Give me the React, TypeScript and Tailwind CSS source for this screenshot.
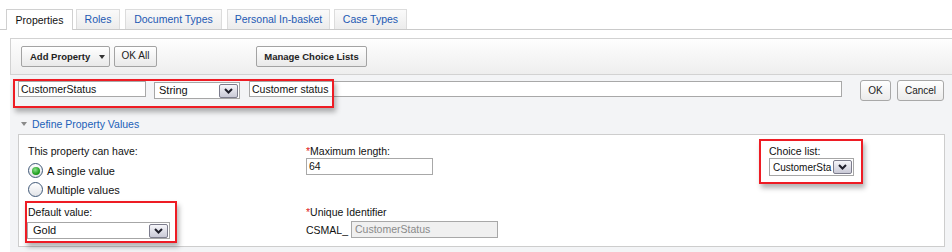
import React from "react";

const Chevron = () => (
  <svg width="9" height="6" viewBox="0 0 9 6" className="block">
    <path d="M1 1 L4.5 4.5 L8 1" fill="none" stroke="#1e1e2a" strokeWidth="2" />
  </svg>
);

const SelectBox = ({
  value,
  className,
  textClass = "",
}: {
  value: string;
  className: string;
  textClass?: string;
}) => (
  <div
    className={`flex items-center border border-[#a6a6a6] bg-white overflow-hidden ${className}`}
  >
    <span className={`flex-1 overflow-hidden whitespace-nowrap ${textClass}`}>{value}</span>
    <div className="mr-[1px] flex h-[14px] w-[19px] shrink-0 items-center justify-center rounded-[2px] border border-[#7c7c8c] bg-gradient-to-b from-[#f6f6fa] to-[#c9c9d6]">
      <Chevron />
    </div>
  </div>
);

const Radio = ({ checked }: { checked: boolean }) => (
  <div className="flex h-[15px] w-[15px] shrink-0 items-center justify-center rounded-full border border-[#3f5877] bg-gradient-to-b from-white to-[#e2e4e8]">
    {checked && (
      <div className="h-[8px] w-[8px] rounded-full bg-[radial-gradient(circle_at_40%_35%,#8be08b,#22a022_60%,#137a13)]" />
    )}
  </div>
);

export default function App() {
  const tabs = [
    { label: "Properties", w: "w-[67px]", ml: "ml-0", active: true },
    { label: "Roles", w: "w-[44px]", ml: "ml-[3px]", active: false },
    { label: "Document Types", w: "w-[97px]", ml: "ml-[5px]", active: false },
    { label: "Personal In-basket", w: "w-[103px]", ml: "ml-[5px]", active: false },
    { label: "Case Types", w: "w-[73px]", ml: "ml-[4px]", active: false },
  ];

  return (
    <div className="relative h-[252px] w-[952px] overflow-hidden bg-white font-['Liberation_Sans',Arial,sans-serif] text-[10.5px] leading-[13px] text-[#111]">
      {/* Tabs */}
      <div className="flex h-[30px] items-end border-b border-[#cacaca] pl-[6px]">
        {tabs.map((t) =>
          t.active ? (
            <div
              key={t.label}
              className={`${t.w} ${t.ml} -mb-px flex h-[21px] items-center justify-center border border-b-0 border-[#d0d0d0] bg-white text-[#111]`}
            >
              {t.label}
            </div>
          ) : (
            <div
              key={t.label}
              className={`${t.w} ${t.ml} flex h-[20px] items-center justify-center border border-b-0 border-[#dcdcdc] bg-gradient-to-b from-[#fafafa] to-[#ececec] text-[#1d59b3]`}
            >
              {t.label}
            </div>
          )
        )}
      </div>

      {/* Toolbar */}
      <div className="ml-[10px] mt-[8px] flex h-[37px] items-start border-y border-l border-[#d2d2d2] bg-gradient-to-b from-[#fefefe] to-[#eeeeee] pl-[10px] pt-[7px]">
        <div className="flex h-[21px] w-[89px] items-center rounded-[2px] border border-[#a3a3a3] bg-gradient-to-b from-white to-[#e9e9e9] pl-[8px] text-[9.5px] font-bold text-[#222]">
          <span>Add Property</span>
          <svg width="6" height="4" viewBox="0 0 6 4" className="ml-[9px] mt-[1px]">
            <path d="M0 0 L6 0 L3 4 Z" fill="#333" />
          </svg>
        </div>
        <div className="ml-[4px] flex h-[21px] w-[43px] items-start justify-center rounded-[2px] border border-[#a3a3a3] bg-gradient-to-b from-white to-[#e9e9e9] pt-[2px] text-[10px] text-[#222]">
          OK All
        </div>
        <div className="ml-[99px] flex h-[21px] w-[111px] items-center justify-center rounded-[2px] border border-[#a3a3a3] bg-gradient-to-b from-white to-[#e9e9e9] text-[9.5px] font-bold text-[#222]">
          Manage Choice Lists
        </div>
      </div>

      {/* Gray content area */}
      <div className="ml-[10px] h-[178px] bg-[#f3f4f6] pt-[5px]">
        {/* Property row */}
        <div className="flex items-start">
          <div className="ml-[8px] mt-[1px] flex h-[16px] w-[128px] items-center border border-[#a8a8a8] bg-white pl-[2px]">
            CustomerStatus
          </div>
          <SelectBox
            value="String"
            className="ml-[8px] mt-[2px] h-[17px] w-[86px]"
            textClass="pl-[4px] text-[11px]"
          />
          <div className="ml-[9px] mt-[1px] flex h-[16px] w-[593px] items-center border border-[#a8a8a8] bg-white pl-[2px]">
            Customer status
          </div>
          <div className="ml-[18px] flex h-[21px] w-[31px] items-center justify-center rounded-[3px] border border-[#a8a8a8] bg-gradient-to-b from-white to-[#ebebeb] text-[10px] text-[#222]">
            OK
          </div>
          <div className="ml-[6px] flex h-[21px] w-[47px] items-center justify-center rounded-[3px] border border-[#a8a8a8] bg-gradient-to-b from-white to-[#ebebeb] text-[10px] text-[#222]">
            Cancel
          </div>
        </div>

        {/* Define Property Values */}
        <div className="mt-[16px] flex h-[14px] items-center pl-[11px]">
          <svg width="6" height="4" viewBox="0 0 6 4">
            <path d="M0 0 L6 0 L3 4 Z" fill="#8a8a8a" />
          </svg>
          <span className="ml-[5px] text-[#2160b8]">Define Property Values</span>
        </div>

        {/* Panel */}
        <div className="ml-[8px] mt-[3px] flex h-[113px] w-[927px] border border-[#cdcdcd] bg-white">
          {/* Column 1 */}
          <div className="flex w-[287px] flex-col pl-[9px] pt-[10px]">
            <div className="h-[13px]">This property can have:</div>
            <div className="mt-[3px] flex h-[17px] items-end">
              <Radio checked />
              <span className="ml-[4px] text-[11px] leading-[13px]">A single value</span>
            </div>
            <div className="mt-[2px] flex h-[17px] items-end">
              <Radio checked={false} />
              <span className="ml-[4px] text-[11px] leading-[13px]">Multiple values</span>
            </div>
            <div className="mt-[9px] h-[13px]">Default value:</div>
            <SelectBox
              value="Gold"
              className="-ml-px mt-[3px] h-[17px] w-[143px]"
              textClass="pl-[5px] text-[11px]"
            />
          </div>

          {/* Column 2 */}
          <div className="flex w-[463px] flex-col pt-[10px]">
            <div className="h-[13px]">
              <span className="text-[#e02020]">*</span>Maximum length:
            </div>
            <div className="flex h-[17px] w-[127px] items-center border border-[#a8a8a8] bg-white pl-[2px]">
              64
            </div>
            <div className="mt-[31px] h-[13px]">
              <span className="text-[#e02020]">*</span>Unique Identifier
            </div>
            <div className="mt-[2px] flex items-center">
              <span className="mt-[1px]">CSMAL_</span>
              <div className="ml-[3px] flex h-[17px] w-[147px] items-center border border-[#a8a8a8] bg-[#f0f0f0] pl-[3px] text-[#8a8a8a]">
                CustomerStatus
              </div>
            </div>
          </div>

          {/* Column 3 */}
          <div className="flex flex-col pt-[10px]">
            <div className="h-[13px]">Choice list:</div>
            <SelectBox
              value="CustomerSta"
              className="h-[18px] w-[85px]"
              textClass="pl-[3px] text-[10px]"
            />
          </div>
        </div>
      </div>

      {/* Annotation boxes */}
      <div className="pointer-events-none absolute left-[13px] top-[79px] h-[29px] w-[321px] border-2 border-[#ee1c24] shadow-[2px_4px_5px_rgba(0,0,0,0.3)]" />
      <div className="pointer-events-none absolute left-[25px] top-[201px] h-[42px] w-[152px] border-2 border-[#ee1c24] shadow-[2px_4px_5px_rgba(0,0,0,0.3)]" />
      <div className="pointer-events-none absolute left-[759px] top-[139px] h-[45px] w-[104px] border-2 border-[#ee1c24] shadow-[2px_4px_5px_rgba(0,0,0,0.3)]" />
    </div>
  );
}
